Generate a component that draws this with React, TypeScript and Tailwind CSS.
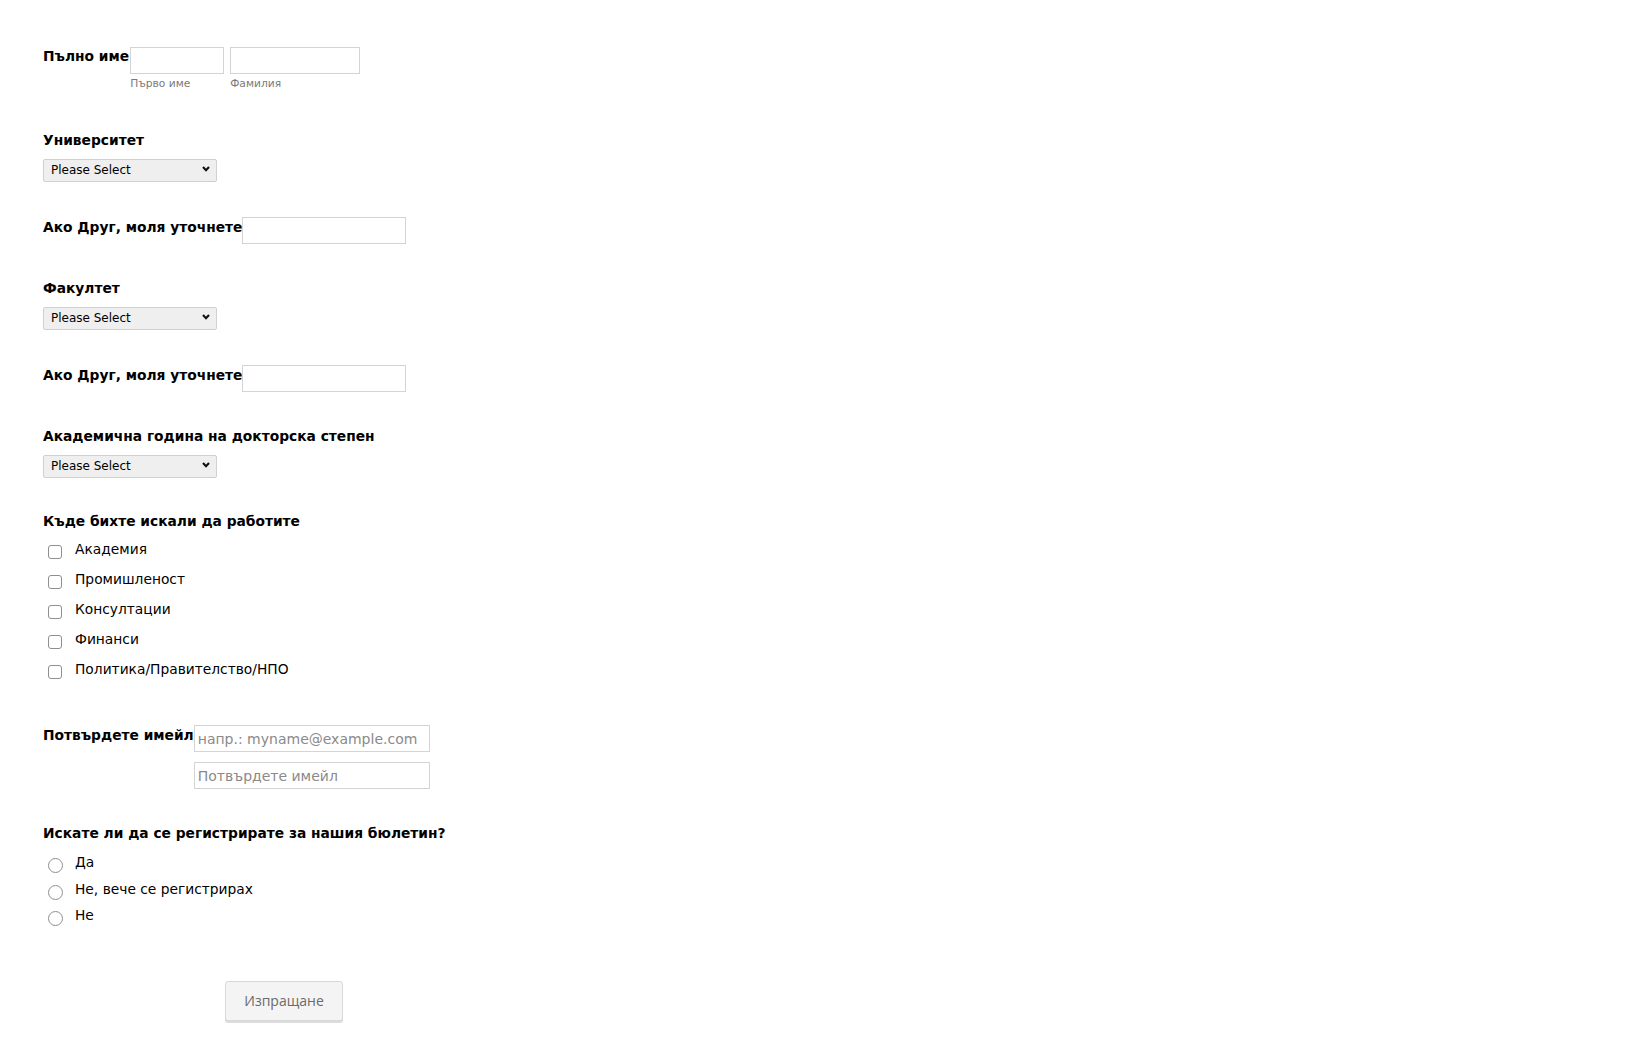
import React from "react";

const Chevron = () => (
  <svg width="8" height="6" viewBox="0 0 8 6" className="absolute right-[7px] top-[9px] pointer-events-none">
    <path d="M1 1 L4 4.2 L7 1" fill="none" stroke="#111" strokeWidth="2.1" />
  </svg>
);

const Select = () => (
  <div className="relative w-[174px] h-[23px]">
    <select className="appearance-none w-full h-full bg-[#efefef] border border-[#d0d0d0] rounded-[2px] pl-[7px] text-[12px] text-black outline-none font-['DejaVu_Sans',sans-serif]">
      <option>Please Select</option>
    </select>
    <Chevron />
  </div>
);

const Label = ({ children, className = "" }: { children: React.ReactNode; className?: string }) => (
  <div className={"font-bold text-[13.8px] leading-[16px] text-black whitespace-nowrap " + className}>{children}</div>
);

const TextBox = ({ w, placeholder }: { w: string; placeholder?: string }) => (
  <input
    type="text"
    placeholder={placeholder}
    className={
      w +
      " h-[27px] border border-[#d4d4d4] bg-white px-[3px] text-[14px] placeholder:text-[#8a8a8a] outline-none font-['DejaVu_Sans',sans-serif]"
    }
  />
);

const Check = ({ label }: { label: string }) => (
  <div className="flex items-start h-[30px]">
    <span className="mt-[4px] ml-[5px] w-[14px] h-[14px] border border-[#8f8f8f] rounded-[3px] bg-white shrink-0" />
    <span className="ml-[13px] text-[13.8px] leading-[16px] text-black">{label}</span>
  </div>
);

const Radio = ({ label }: { label: string }) => (
  <div className="flex items-start h-[26.5px]">
    <span className="mt-[4px] ml-[5px] w-[15px] h-[15px] border border-[#8f8f8f] rounded-full bg-white shrink-0" />
    <span className="ml-[12px] text-[13.8px] leading-[16px] text-black">{label}</span>
  </div>
);

export default function App() {
  return (
    <div className="min-h-[1060px] bg-white pl-[43px] pt-[47px] font-['DejaVu_Sans',sans-serif] text-black">
      {/* Full name */}
      <div className="flex items-start">
        <Label className="mt-[1px] pr-[1px]">Пълно име</Label>
        <div className="flex gap-[6px]">
          <div className="flex flex-col">
            <TextBox w="w-[94px]" />
            <span className="mt-[3px] text-[10.7px] leading-[13px] text-[#7a7a7a]">Първо име</span>
          </div>
          <div className="flex flex-col">
            <TextBox w="w-[130px]" />
            <span className="mt-[3px] text-[10.7px] leading-[13px] text-[#7a7a7a]">Фамилия</span>
          </div>
        </div>
      </div>

      {/* University */}
      <div className="mt-[42px]">
        <Label>Университет</Label>
        <div className="mt-[9px]">
          <Select />
        </div>
      </div>

      {/* Other */}
      <div className="mt-[37px] flex items-start">
        <Label className="mt-[2px]">Ако Друг, моля уточнете</Label>
        <TextBox w="w-[164px]" />
      </div>

      {/* Faculty */}
      <div className="mt-[36px]">
        <Label>Факултет</Label>
        <div className="mt-[9px]">
          <Select />
        </div>
      </div>

      {/* Other */}
      <div className="mt-[37px] flex items-start">
        <Label className="mt-[2px]">Ако Друг, моля уточнете</Label>
        <TextBox w="w-[164px]" />
      </div>

      {/* Academic year */}
      <div className="mt-[36px]">
        <Label>Академична година на докторска степен</Label>
        <div className="mt-[9px]">
          <Select />
        </div>
      </div>

      {/* Where to work */}
      <div className="mt-[37px]">
        <Label>Къде бихте искали да работите</Label>
        <div className="mt-[12px] flex flex-col">
          <Check label="Академия" />
          <Check label="Промишленост" />
          <Check label="Консултации" />
          <Check label="Финанси" />
          <Check label="Политика/Правителство/НПО" />
        </div>
      </div>

      {/* Email */}
      <div className="mt-[34px] flex items-start">
        <Label className="mt-[2px]">Потвърдете имейл</Label>
        <div className="flex flex-col gap-[10px]">
          <TextBox w="w-[236px]" placeholder="напр.: myname@example.com" />
          <TextBox w="w-[236px]" placeholder="Потвърдете имейл" />
        </div>
      </div>

      {/* Newsletter */}
      <div className="mt-[36px]">
        <Label>Искате ли да се регистрирате за нашия бюлетин?</Label>
        <div className="mt-[13px] flex flex-col">
          <Radio label="Да" />
          <Radio label="Не, вече се регистрирах" />
          <Radio label="Не" />
        </div>
      </div>

      {/* Submit */}
      <div className="mt-[47px] pl-[182px]">
        <button className="w-[118px] h-[40px] bg-[#f4f4f4] border border-[#d8d8d8] rounded-[3px] shadow-[0_2px_0_#dcdcdc] text-[14px] text-[#6b6b6b] font-['Open_Sans',sans-serif]">
          Изпращане
        </button>
      </div>
    </div>
  );
}
